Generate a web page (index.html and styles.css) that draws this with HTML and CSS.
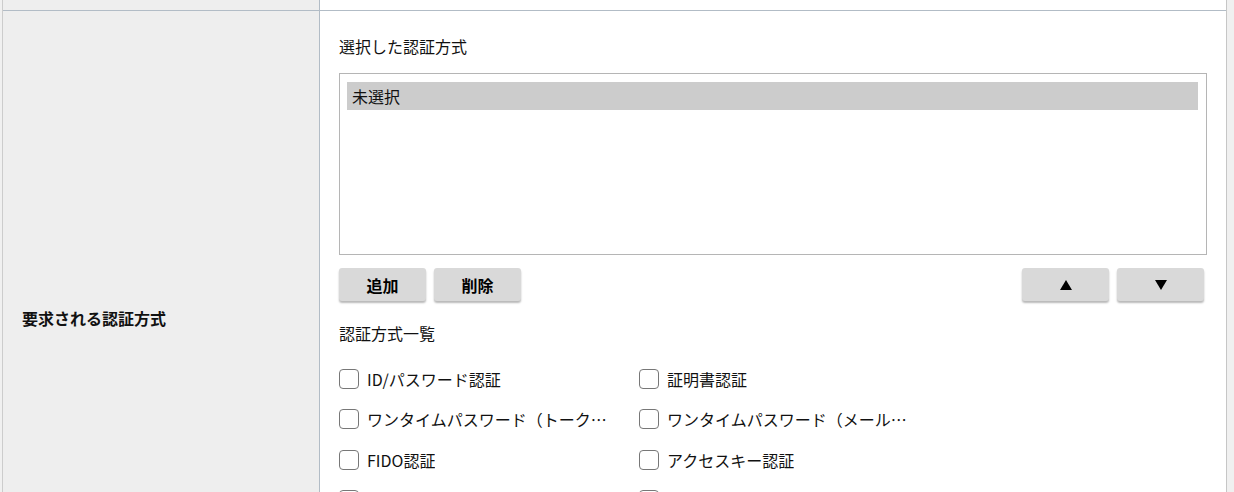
FILE: index.html
```html
<!DOCTYPE html>
<html lang="ja">
<head>
<meta charset="utf-8">
<title>認証方式</title>
<link rel="stylesheet" href="styles.css">
</head>
<body>
<div class="table">
  <div class="head-cell"></div>
  <div class="cell-top"></div>
  <div class="head-cell main">要求される認証方式</div>
  <div class="cell">
    <div class="caption">選択した認証方式</div>
    <div class="listbox">
      <div class="option selected">未選択</div>
    </div>
    <div class="toolbar">
      <div class="group">
        <button class="btn">追加</button>
        <button class="btn">削除</button>
      </div>
      <div class="group">
        <button class="btn" aria-label="上へ"><svg width="12" height="10" viewBox="0 0 12 10"><polygon points="6,0 12,10 0,10" fill="#000"/></svg></button>
        <button class="btn" aria-label="下へ"><svg width="12" height="10" viewBox="0 0 12 10"><polygon points="0,0 12,0 6,10" fill="#000"/></svg></button>
      </div>
    </div>
    <div class="caption list-caption">認証方式一覧</div>
    <div class="checks">
      <label class="check"><span class="box"></span><span class="text">ID/パスワード認証</span></label>
      <label class="check"><span class="box"></span><span class="text">証明書認証</span></label>
      <label class="check"><span class="box"></span><span class="text">ワンタイムパスワード（トークン）</span></label>
      <label class="check"><span class="box"></span><span class="text">ワンタイムパスワード（メール送信）</span></label>
      <label class="check"><span class="box"></span><span class="text">FIDO認証</span></label>
      <label class="check"><span class="box"></span><span class="text">アクセスキー認証</span></label>
      <label class="check"><span class="box"></span><span class="text">SMS認証</span></label>
      <label class="check"><span class="box"></span><span class="text">生体認証</span></label>
    </div>
  </div>
</div>
</body>
</html>
```

FILE: styles.css
```css
html, body {
  margin: 0;
  padding: 0;
}
body {
  background: #f0f0f0;
  font-family: "Noto Sans CJK JP", "Noto Sans", sans-serif;
  color: #111;
  font-size: 16px;
}
.table {
  margin-left: 2px;
  width: 1225px;
  box-sizing: border-box;
  border-left: 1px solid #cccccc;
  border-right: 1px solid #c6c6c6;
  display: grid;
  grid-template-columns: 317px 1fr;
  grid-template-rows: 11px minmax(614px, auto);
}
.head-cell {
  background: #eeeeee;
  border-right: 1px solid #b2bcc6;
  border-bottom: 1px solid #b2bcc6;
}
.cell-top {
  background: #fff;
  border-bottom: 1px solid #b2bcc6;
}
.head-cell.main {
  display: flex;
  align-items: center;
  padding-left: 19px;
  font-weight: 700;
  font-size: 16px;
  line-height: 24px;
  border-bottom: none;
}
.cell {
  background: #fff;
  padding: 23px 19px 20px 19px;
}
.caption {
  line-height: 24px;
  font-size: 16px;
}
.listbox {
  margin-top: 15px;
  height: 182px;
  box-sizing: border-box;
  border: 1px solid #b5b5b5;
  padding: 8px 8px 8px 7px;
}
.option {
  height: 28px;
  line-height: 28px;
  padding-left: 5px;
}
.option.selected {
  background: #cccccc;
}
.toolbar {
  margin-top: 13px;
  display: flex;
  justify-content: space-between;
  padding-right: 3px;
}
.group {
  display: flex;
  gap: 8px;
}
.btn {
  width: 87px;
  height: 33px;
  border: none;
  border-radius: 3px;
  background: #d9d9d9;
  box-shadow: 0 2px 2px rgba(0, 0, 0, 0.28);
  font-family: inherit;
  font-size: 16px;
  font-weight: 700;
  color: #000;
  display: flex;
  align-items: center;
  justify-content: center;
  padding: 0;
}
.list-caption {
  margin-top: 20px;
}
.checks {
  margin-top: 14px;
  display: grid;
  grid-template-columns: 300px 300px;
  grid-auto-rows: 40.33px;
}
.check {
  display: flex;
  align-items: center;
  gap: 8px;
}
.box {
  width: 20px;
  height: 20px;
  box-sizing: border-box;
  border: 1.5px solid #777777;
  border-radius: 4px;
  background: #fff;
  flex: none;
}
.text {
  max-width: 240px;
  white-space: nowrap;
  overflow: hidden;
  text-overflow: ellipsis;
  line-height: 24px;
}
```
